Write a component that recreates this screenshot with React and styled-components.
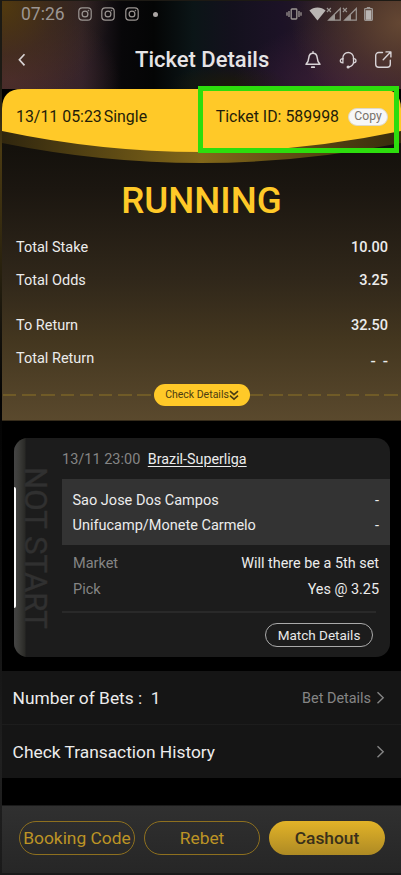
import React from 'react';
import styled, { createGlobalStyle } from 'styled-components';

const GlobalStyle = createGlobalStyle`
  * {
    box-sizing: border-box;
  }
  body {
    margin: 0;
    background: #000;
    font-family: Roboto, sans-serif;
  }
`;

const Screen = styled.div`
  width: 401px;
  height: 875px;
  padding-left: 2px;
  display: flex;
  flex-direction: column;
  overflow: hidden;
  color: #ececec;
  background: linear-gradient(#1c1a14 0, #1c1a14 80px, #4a3a12 150px, #3a2e10 215px, #14120c 330px, #030303 400px, #0c0c0c 560px, #202020 760px, #1a1a1a 875px);
`;

const Header = styled.header`
  height: 89px;
  flex: none;
  border-top: 1px solid #1d1a14;
  background:
    radial-gradient(ellipse 110px 95px at 100% 25%, #644733 0%, rgba(90, 62, 46, 0.55) 50%, transparent 100%),
    radial-gradient(ellipse 120px 70px at 88% 100%, #3b1e38 0%, transparent 100%),
    radial-gradient(ellipse 60px 20px at 57% 95%, #1b190b 0%, transparent 100%),
    radial-gradient(ellipse 110px 100px at 0% 5%, #51390f 0%, rgba(70, 48, 22, 0.5) 50%, transparent 100%),
    radial-gradient(ellipse 110px 80px at 2% 90%, #4c2c30 0%, transparent 100%),
    linear-gradient(90deg, #30221f 0%, #2b1f27 20%, #080709 30%, #040505 38%, #0b1517 48%, #13111d 57%, #1c1226 70%, #281b24 85%, #35211f 100%);
`;

const StatusBar = styled.div`
  height: 26px;
  padding: 0 28px 0 19px;
  display: flex;
  align-items: center;
  color: #9c9693;
`;

const Clock = styled.span`
  width: 56.5px;
  font-size: 17.5px;
  line-height: 26px;
`;

const StatusIcons = styled.div`
  display: flex;
  align-items: center;
  gap: ${(props) => props.$gap || 0}px;
`;

const Dot = styled.i`
  width: 5px;
  height: 5px;
  margin-left: 5px;
  border-radius: 50%;
  background: #aaa5a3;
`;

const Spacer = styled.div`
  flex: 1;
`;

const TitleBar = styled.div`
  height: 62px;
  padding: 4px 9px 0 14px;
  display: flex;
  align-items: center;
`;

const Title = styled.h1`
  width: 136px;
  margin: 0 0 0 109px;
  font-size: 22px;
  font-weight: 500;
  line-height: 26px;
  white-space: nowrap;
  color: #e6e4e5;
`;

const Actions = styled.div`
  display: flex;
  gap: 17px;
  color: #d8d3d6;
`;

const Ticket = styled.section`
  position: relative;
  height: 332px;
  flex: none;
  display: flex;
  flex-direction: column;
  border-bottom: 1px solid #362c1b;
  background: linear-gradient(#0c0b09 0, #14110c 60px, #1b1610 100px, #30271a 190px, #43361f 250px, #5a492d 331px);
`;

const TicketCurve = styled.svg`
  position: absolute;
  top: 0;
  left: 0;
`;

const TicketHead = styled.div`
  position: relative;
  height: 54px;
  padding: 1px 13px 0 14px;
  display: flex;
  align-items: center;
  font-size: 15.9px;
  color: #241d08;
`;

const TicketType = styled.span`
  margin-left: 2px;
`;

const CopyButton = styled.button`
  width: 40px;
  height: 18px;
  margin-left: 9px;
  padding: 0;
  border: 1px solid #ddd8c8;
  border-radius: 9px;
  background: #f7f7f7;
  color: #77736c;
  font: 12.2px/15px Roboto, sans-serif;
`;

// Callout frame around the ticket number
const Highlight = styled.div`
  position: absolute;
  top: -3px;
  left: 196px;
  width: 201px;
  height: 67px;
  border: 5px solid #2ddd0d;
`;

const Status = styled.h2`
  position: relative;
  margin: 35px 0 0;
  height: 46px;
  font-size: 36.7px;
  font-weight: 500;
  line-height: 46px;
  text-align: center;
  color: #ffc928;
`;

const Summary = styled.dl`
  margin: 7px 0 0;
  padding: 0 13px 0 14px;
`;

const SummaryRow = styled.div`
  height: 33px;
  margin-top: ${(props) => (props.$spaced ? 12 : 0)}px;
  display: flex;
  justify-content: space-between;
  font-size: 14.5px;
  line-height: 33px;

  dt,
  dd {
    margin: 0;
  }
  dd {
    font-weight: 500;
  }
`;

const Dashes = styled.dd`
  padding-top: 3px;
  font-size: 15.5px;
  word-spacing: 3px;
`;

const CheckRow = styled.div`
  height: 22px;
  margin-top: 9px;
  padding-left: 1px;
  display: flex;
  align-items: center;
`;

const DashLine = styled.div`
  flex: 1;
  height: 2px;
  background: repeating-linear-gradient(90deg, #705b27 0 13.4px, transparent 13.4px 19.2px);
`;

const CheckButton = styled.button`
  width: 96px;
  height: 22px;
  padding: 0;
  display: flex;
  align-items: center;
  justify-content: center;
  border: 0;
  border-radius: 11px;
  background: #ffc928;
  color: #4b3d12;
  font: 10.5px/22px Roboto, sans-serif;
  white-space: nowrap;
`;

const Body = styled.main`
  flex: none;
  height: 250px;
  padding: 17px 11px 0 12px;
  background: #000;
`;

const MatchCard = styled.article`
  height: 219px;
  display: grid;
  grid-template-columns: 48px 1fr;
  border-radius: 14px;
  overflow: hidden;
  background: #1c1c1c;
`;

const StateRail = styled.div`
  display: flex;
  align-items: center;
  background: linear-gradient(90deg, #454545 0, #3c3c39 5px, #292926 11px, #1c1c1c 12px);
`;

const RailBar = styled.div`
  width: 2px;
  height: 121px;
  border-radius: 0 2px 2px 0;
  background: #fff;
`;

const RailText = styled.div`
  width: 32px;
  margin-left: 3px;
  writing-mode: vertical-rl;
  font-size: 31.2px;
  line-height: 32px;
  white-space: nowrap;
  color: #303030;
  -webkit-text-stroke: 0.4px #303030;
`;

const MatchInfo = styled.div`
  font-size: 14.5px;
`;

const MatchHead = styled.div`
  height: 41px;
  padding-top: 1px;
  display: flex;
  gap: 7.5px;
  line-height: 41px;
  color: #858585;
`;

const League = styled.span`
  font-size: 14.3px;
  color: #ececec;
  text-decoration: underline;
  text-underline-offset: 1.5px;
`;

const Teams = styled.div`
  height: 66px;
  padding: 10px 11px 0 10.5px;
  background: #333;
`;

const InfoRow = styled.div`
  height: ${(props) => props.$height}px;
  display: flex;
  justify-content: space-between;
  line-height: ${(props) => props.$height}px;
  white-space: nowrap;
`;

const Picks = styled.div`
  height: 68px;
  margin-right: 14px;
  padding: 6px 0 0 11px;
  border-bottom: 2px solid #292929;

  ${InfoRow} {
    margin-right: -3px;
  }
`;

const Label = styled.span`
  color: #858585;
`;

const PickValue = styled.span`
  font-size: 14.4px;
`;

const MatchButton = styled.button`
  display: block;
  width: 108px;
  height: 24px;
  margin: 10px 17px 0 auto;
  padding: 0;
  border: 1.5px solid #aaa;
  border-radius: 12px;
  background: none;
  color: #e8e8e8;
  font: 13.5px/21px Roboto, sans-serif;
  white-space: nowrap;
`;

const LinkRow = styled.div`
  height: 53px;
  margin-bottom: 1px;
  padding: 0 16px 0 10.6px;
  flex: none;
  display: flex;
  align-items: center;
  background: #151515;
  font-size: 17.35px;
  white-space: pre;
`;

const LinkHint = styled.span`
  margin: 1px 5px 0 0;
  font-size: 14.4px;
  color: #858585;
`;

const Gap = styled.div`
  height: 27px;
  margin-top: -1px;
  flex: none;
  background: #000;
`;

const Footer = styled.footer`
  height: 68px;
  flex: none;
  padding: 15px 16px 0 17px;
  display: flex;
  gap: 9px;
  border-top: 1px solid #1a1a1a;
  background: linear-gradient(#303030, #262626);
`;

const ActionButton = styled.button`
  width: 116px;
  height: 34px;
  padding: 0;
  border: ${(props) => (props.$filled ? '0' : '1.5px solid #8e701f')};
  border-radius: 17px;
  background: ${(props) => (props.$filled ? 'linear-gradient(#e2b328, #ae8a24)' : 'none')};
  color: ${(props) => (props.$filled ? '#39301a' : '#bd9425')};
  font: ${(props) => (props.$filled ? 500 : 400)} 17.4px/32px Roboto, sans-serif;
  white-space: nowrap;
`;

const InstagramIcon = () => (
  <svg width="14" height="14" viewBox="0 0 14 14" fill="none" stroke="currentColor" strokeWidth="1.2">
    <rect x="0.8" y="0.8" width="12.4" height="12.4" rx="3.4" />
    <circle cx="7" cy="7" r="2.9" />
    <circle cx="10.4" cy="3.6" r="0.5" fill="currentColor" strokeWidth="0.5" />
  </svg>
);

const VibrateSvg = styled.svg`
  margin-right: 7px;
`;

const VibrateIcon = () => (
  <VibrateSvg width="16" height="14" viewBox="0 0 16 14" fill="none" stroke="currentColor" strokeWidth="1.3">
    <rect x="5.2" y="2" width="5.6" height="10" rx="0.8" />
    <path d="M3 4v6M1 5.3v3.4M13 4v6M15 5.3v3.4" />
  </VibrateSvg>
);

const WifiIcon = () => (
  <svg width="17" height="14" viewBox="0 0 17 14" fill="#b9b5b3">
    <path d="M8.5 13.6 0.4 3.4C2.6 1.5 5.4 0.5 8.5 0.5s5.9 1 8.1 2.9z" />
  </svg>
);

const SignalIcon = () => (
  <svg width="16" height="14" viewBox="0 0 16 14" fill="none" stroke="currentColor">
    <path d="M14.3 1.5v11.6H2.6z" strokeWidth="1.2" />
    <path d="M9 7v6.3H2.6z" fill="currentColor" stroke="none" />
    <path d="M0.9 1l4 4M4.9 1l-4 4" strokeWidth="1.1" />
  </svg>
);

const BatterySvg = styled.svg`
  margin-left: 6px;
`;

const BatteryIcon = () => (
  <BatterySvg width="9" height="14" viewBox="0 0 9 14" fill="none" stroke="currentColor">
    <path d="M2.8 0h3.4v1.4H2.8z" fill="currentColor" stroke="none" />
    <rect x="0.6" y="1.6" width="7.8" height="11.8" rx="0.8" strokeWidth="1.2" />
    <path d="M1.6 3.2h5.8v9.6H1.6z" fill="#b9b5b3" stroke="none" />
  </BatterySvg>
);

const BackIcon = () => (
  <svg width="10" height="14" viewBox="0 0 10 14" fill="none" stroke="#d8d3d3" strokeWidth="1.7">
    <path d="M8.5 1.2 3.4 6.8l5.1 5.6" />
  </svg>
);

const BellIcon = () => (
  <svg width="18" height="18" viewBox="0 0 18 18" fill="none" stroke="currentColor" strokeWidth="1.5" strokeLinejoin="round" strokeLinecap="round">
    <path d="M9 2.2c-2.8 0-4 2-4.2 4.5-.2 3-.9 4.700-2.800 6.500h14c-1.900-1.800-2.600-3.500-2.800-6.500C13 4.200 11.800 2.200 9 2.200zM9 .8v1.200" />
    <path d="M7.800 16.200h2.400" strokeWidth="1.800" />
  </svg>
);

const HeadsetIcon = () => (
  <svg width="18" height="18" viewBox="0 0 18 18" fill="none" stroke="currentColor" strokeWidth="1.3" strokeLinecap="round">
    <path d="M3.900 8V6.800a5.200 5.200 0 0 1 10.600 0V8" />
    <path d="M3.900 7.600C2.300 7.600 1.300 8.500 1.300 9.700s1 2.100 2.600 2.100zM14.500 7.600c1.600 0 2.500.9 2.500 2.100s-.9 2.100-2.500 2.100z" />
    <path d="M14.500 11.800c-.5 2-2.100 3.600-4.600 4" />
    <circle cx="9.100" cy="16" r="0.900" fill="currentColor" />
  </svg>
);

const ShareIcon = () => (
  <svg width="18" height="18" viewBox="0 0 18 18" fill="none" stroke="currentColor" strokeWidth="1.4" strokeLinecap="round" strokeLinejoin="round">
    <path d="M8.500 1.500H4.700a3 3 0 0 0-3 3v8.800a3 3 0 0 0 3 3h8.600a3 3 0 0 0 3-3V9.200" />
    <path d="M9.200 8.800 16.600 1.100M12 .9h4.900v5" />
  </svg>
);

const DoubleChevron = () => (
  <svg width="10" height="11" viewBox="0 0 10 11" fill="none" stroke="currentColor" strokeWidth="1.6">
    <path d="M1 1.200l4 3.500 4-3.500M1 5.600l4 3.500 4-3.500" />
  </svg>
);

const ChevronRight = () => (
  <svg width="9" height="14" viewBox="0 0 9 14" fill="none" stroke="#858585" strokeWidth="1.4">
    <path d="M1.500 1.200 7.200 6.700l-5.700 5.600" />
  </svg>
);

const teams = ['Sao Jose Dos Campos', 'Unifucamp/Monete Carmelo'];

const App = () => {
  return (
    <>
      <GlobalStyle />
      <Screen>
        <Header>
          <StatusBar>
            <Clock>07:26</Clock>
            <StatusIcons $gap={9.5}>
              <InstagramIcon />
              <InstagramIcon />
              <InstagramIcon />
              <Dot />
            </StatusIcons>
            <Spacer />
            <StatusIcons>
              <VibrateIcon />
              <WifiIcon />
              <SignalIcon />
              <SignalIcon />
              <BatteryIcon />
            </StatusIcons>
          </StatusBar>
          <TitleBar>
            <BackIcon />
            <Title>Ticket Details</Title>
            <Spacer />
            <Actions>
              <BellIcon />
              <HeadsetIcon />
              <ShareIcon />
            </Actions>
          </TitleBar>
        </Header>

        <Ticket>
          <TicketCurve width="399" height="80" viewBox="0 0 399 80">
            <defs>
              <linearGradient id="band">
                <stop offset="0" stopColor="#30260e" />
                <stop offset="0.5" stopColor="#826719" />
                <stop offset="1" stopColor="#372b0d" />
              </linearGradient>
            </defs>
            <path d="M0 0h399v20H0z" fill="#000" />
            <path d="M0 30V54Q198 94 399 54V30z" fill="url(#band)" />
            <path d="M0 20Q0 0 20 0H379Q399 0 399 20V42Q198 84 0 42z" fill="#ffc928" />
          </TicketCurve>
          <TicketHead>
            <span>13/11 05:23</span>
            <TicketType>Single</TicketType>
            <Spacer />
            <span>Ticket ID: 589998</span>
            <CopyButton>Copy</CopyButton>
          </TicketHead>
          <Highlight />
          <Status>RUNNING</Status>
          <Summary>
            <SummaryRow>
              <dt>Total Stake</dt>
              <dd>10.00</dd>
            </SummaryRow>
            <SummaryRow>
              <dt>Total Odds</dt>
              <dd>3.25</dd>
            </SummaryRow>
            <SummaryRow $spaced>
              <dt>To Return</dt>
              <dd>32.50</dd>
            </SummaryRow>
            <SummaryRow>
              <dt>Total Return</dt>
              <Dashes>- -</Dashes>
            </SummaryRow>
          </Summary>
          <CheckRow>
            <DashLine />
            <CheckButton>
              Check Details
              <DoubleChevron />
            </CheckButton>
            <DashLine />
          </CheckRow>
        </Ticket>

        <Body>
          <MatchCard>
            <StateRail>
              <RailBar />
              <RailText>NOT START</RailText>
            </StateRail>
            <MatchInfo>
              <MatchHead>
                <span>13/11 23:00</span>
                <League>Brazil-Superliga</League>
              </MatchHead>
              <Teams>
                {teams.map((team) => (
                  <InfoRow key={team} $height={24.5}>
                    <span>{team}</span>
                    <span>-</span>
                  </InfoRow>
                ))}
              </Teams>
              <Picks>
                <InfoRow $height={26}>
                  <Label>Market</Label>
                  <PickValue>Will there be a 5th set</PickValue>
                </InfoRow>
                <InfoRow $height={26}>
                  <Label>Pick</Label>
                  <PickValue>Yes @ 3.25</PickValue>
                </InfoRow>
              </Picks>
              <MatchButton>Match Details</MatchButton>
            </MatchInfo>
          </MatchCard>
        </Body>

        <LinkRow>
          <span>Number of Bets :  1</span>
          <Spacer />
          <LinkHint>Bet Details</LinkHint>
          <ChevronRight />
        </LinkRow>
        <LinkRow>
          <span>Check Transaction History</span>
          <Spacer />
          <ChevronRight />
        </LinkRow>
        <Gap />

        <Footer>
          <ActionButton>Booking Code</ActionButton>
          <ActionButton>Rebet</ActionButton>
          <ActionButton $filled>Cashout</ActionButton>
        </Footer>
      </Screen>
    </>
  );
};

export default App;
